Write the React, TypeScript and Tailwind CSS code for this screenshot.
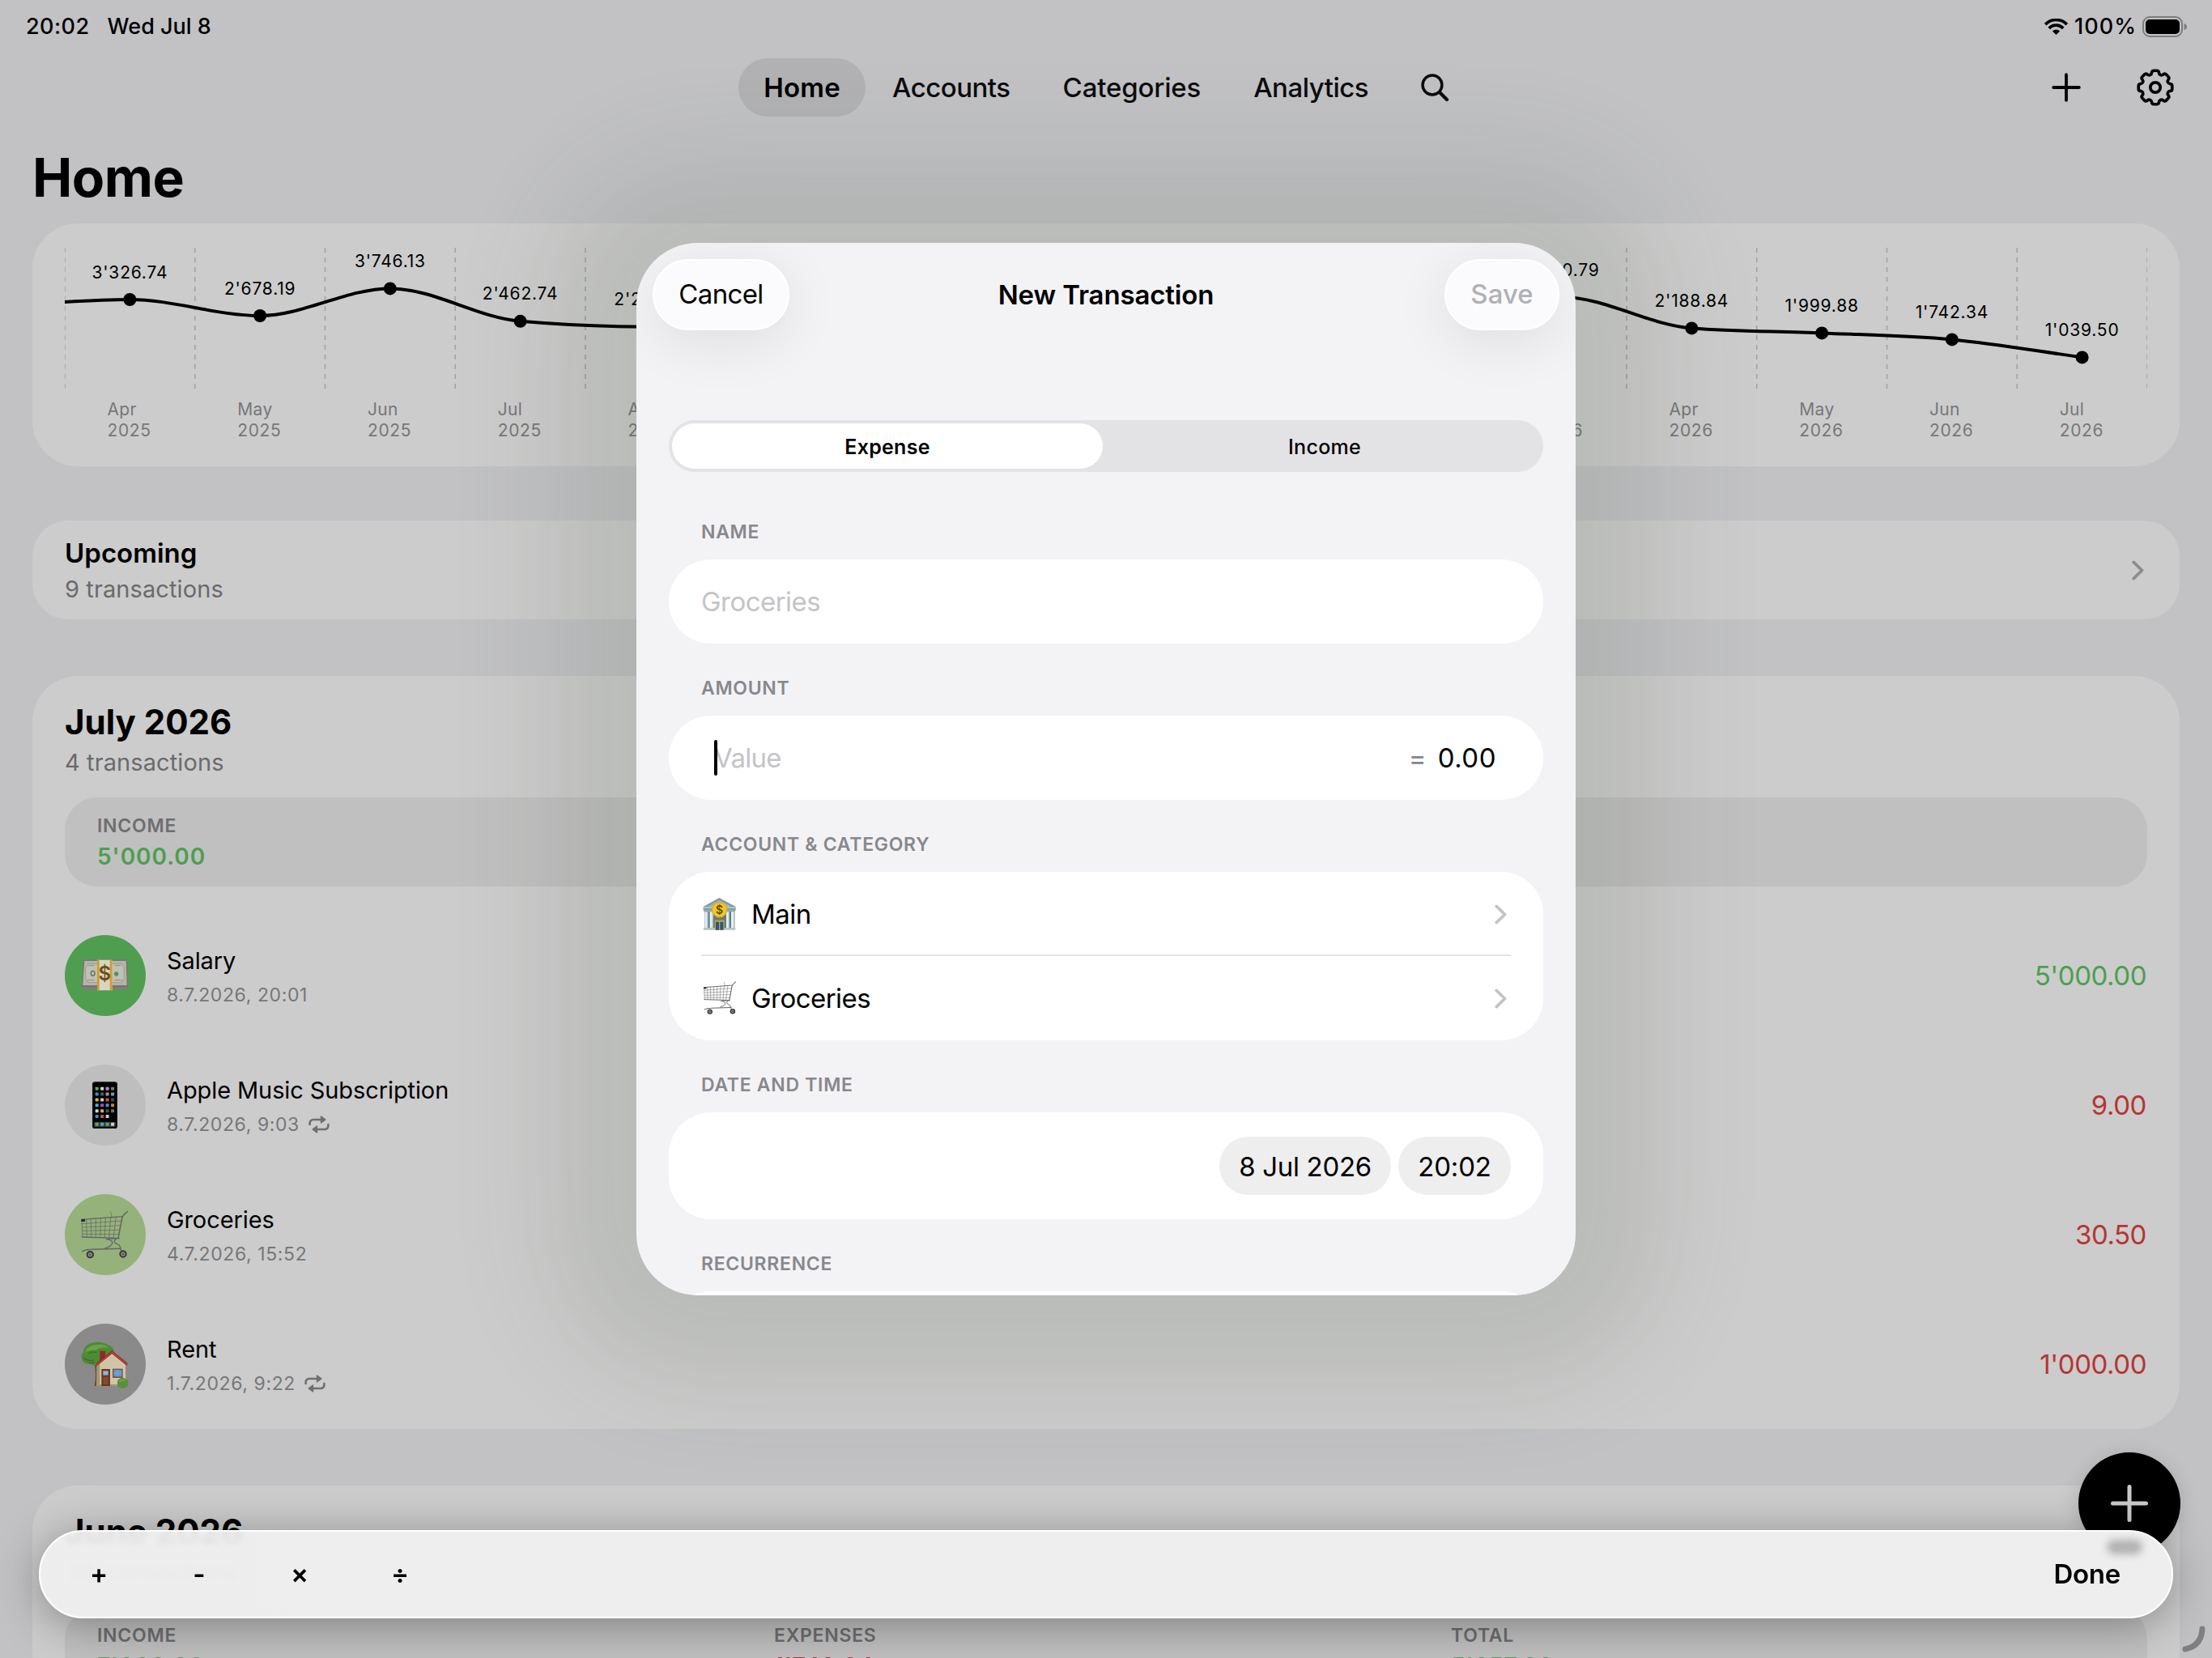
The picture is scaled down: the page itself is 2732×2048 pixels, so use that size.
import type { ReactNode } from "react";
import clsx from "clsx";

interface Transaction {
    name: string;
    date: string;
    amount: string;
    income?: boolean;
    recurring?: boolean;
    circle: string;
    icon: ReactNode;
}

const MONTH_WIDTH = 160.75;

const balances = [
    { month: "Apr", year: "2025", label: "3'326.74", y: 94 },
    { month: "May", year: "2025", label: "2'678.19", y: 114 },
    { month: "Jun", year: "2025", label: "3'746.13", y: 80.4 },
    { month: "Jul", year: "2025", label: "2'462.74", y: 120.8 },
    { month: "Aug", year: "2025", label: "2'249.10", y: 127.6 },
    { month: "Sep", year: "2025", label: "2'310.55", y: 125.6 },
    { month: "Oct", year: "2025", label: "2'604.20", y: 116.4 },
    { month: "Nov", year: "2025", label: "2'480.00", y: 120.2 },
    { month: "Dec", year: "2025", label: "2'905.35", y: 107 },
    { month: "Jan", year: "2026", label: "3'104.90", y: 100.8 },
    { month: "Feb", year: "2026", label: "3'288.45", y: 95 },
    { month: "Mar", year: "2026", label: "3'420.79", y: 91 },
    { month: "Apr", year: "2026", label: "2'188.84", y: 129.4 },
    { month: "May", year: "2026", label: "1'999.88", y: 135.4 },
    { month: "Jun", year: "2026", label: "1'742.34", y: 143.4 },
    { month: "Jul", year: "2026", label: "1'039.50", y: 165.4 },
];

const monthX = (i: number) => (i + 0.5) * MONTH_WIDTH;

// Monotone cubic interpolation through the points
const curve = (pts: [number, number][]) => {
    const slopes = pts.slice(1).map((p, i) => (p[1] - pts[i][1]) / (p[0] - pts[i][0]));
    const tangent = (i: number) => {
        if (i === 0) return slopes[0];
        if (i === pts.length - 1) return slopes[slopes.length - 1];
        const a = slopes[i - 1];
        const b = slopes[i];
        if (a * b <= 0) return 0;
        return Math.sign(a) * 2 * Math.min(Math.abs(a), Math.abs(b), Math.abs(a + b) / 4);
    };
    return pts.slice(1).reduce((d, p, i) => {
        const q = pts[i];
        const h = (p[0] - q[0]) / 3;
        return `${d}C${q[0] + h} ${q[1] + h * tangent(i)} ${p[0] - h} ${p[1] - h * tangent(i + 1)} ${p[0]} ${p[1]}`;
    }, `M${pts[0][0]} ${pts[0][1]}`);
};

const BalanceChart = () => (
    <svg className="block h-[300px] w-[2572px]" viewBox="0 0 2572 300">
        {Array.from({ length: 17 }, (_, i) => (
            <line
                key={i}
                x1={i * MONTH_WIDTH}
                x2={i * MONTH_WIDTH}
                y1="30"
                y2="204"
                stroke="#a2a2a2"
                strokeWidth="1.6"
                strokeDasharray="6 6"
            />
        ))}
        <path
            d={curve([[-MONTH_WIDTH / 2, 102], ...balances.map((b, i): [number, number] => [monthX(i), b.y])])}
            fill="none"
            stroke="#000"
            strokeWidth="4"
        />
        {balances.map((b, i) => (
            <g key={i}>
                <circle cx={monthX(i)} cy={b.y} r="8" />
                <text x={monthX(i)} y={b.y - 26.5} textAnchor="middle" className="text-[21px] tracking-[0.8px]">
                    {b.label}
                </text>
                <text x={monthX(i) - 28} y="237" className="fill-[#777779] text-[21px] tracking-[0.4px]">
                    {b.month}
                </text>
                <text x={monthX(i) - 28} y="263" className="fill-[#777779] text-[21px] tracking-[0.7px]">
                    {b.year}
                </text>
            </g>
        ))}
    </svg>
);

const MoneyEmoji = () => (
    <svg className="size-full" viewBox="30 15 300 300">
        <path d="M93 203h172l-1 14H98z" fill="#6d6d69" />
        <path d="M94 210h170M95 215h168" stroke="#a3a39d" strokeWidth="1.5" />
        <path d="M98 106h164l3 100H92z" fill="#77776f" />
        <path d="M103 111h154l3 90H97z" fill="#b4b5a8" />
        <path d="M116 122h125q2 10 9 12v44q-8 2-9 13H116q-2-11-9-13v-44q8-2 9-12z" fill="#bfc1b2" stroke="#8f9188" strokeWidth="2" />
        <path d="M118 128h22M216 128h20M114 182h26M214 182h26" stroke="#8f9188" strokeWidth="3" />
        <ellipse cx="134" cy="157" rx="7" ry="9" fill="none" stroke="#66675f" strokeWidth="4" />
        <circle cx="221" cy="159" r="8" fill="#4f8f6c" />
        <path d="M150 107h55l1 113h-56z" fill="#d9d5c5" />
        <path d="M150 107h8v113h-8zM197 107h8l1 113h-9z" fill="#d19e27" />
        <text x="178" y="184" textAnchor="middle" className="fill-[#6b4f17] text-[72px] font-semibold">$</text>
    </svg>
);

const apps = [
    ["#44b84e", "#d2d2d2", "#b885cc", "#77777b"],
    ["#3c8fce", "#56565a", "#a99588", "#57aebf"],
    ["#cdb94c", "#d0d0d0", "#c8504a", "#48484c"],
    ["#4bb0c9", "#bd42c6", "#3c92d8", "#d2821f"],
    ["#d2d2d2", "#c5bc47", "#515155", "#717175"],
    ["#3f8fd6", "#c8544c", "#cccccc"],
];

const PhoneEmoji = () => (
    <svg className="size-full" viewBox="30 495 300 300">
        <rect x="132" y="559" width="93" height="173" rx="10" fill="#000" />
        <rect x="134" y="561" width="89" height="169" rx="9" fill="none" stroke="#2c2c2e" strokeWidth="2" />
        {apps.map((row, r) =>
            row.map((color, c) => (
                <rect key={`${r}-${c}`} x={143 + c * 19.4} y={578 + r * 20.6} width="12" height="12" rx="2" fill={color} />
            ))
        )}
        <rect x="138" y="707" width="81" height="19" rx="5" fill="#3b3b3e" />
        {["#44b84e", "#49a9cf", "#4bb654", "#cfcfcf"].map((color, c) => (
            <rect key={c} x={143 + c * 19.4} y="710" width="12" height="12" rx="2" fill={color} />
        ))}
    </svg>
);

const CartEmoji = ({ viewBox, className }: { viewBox: string; className: string }) => (
    <svg className={className} viewBox={viewBox} fill="none" stroke="#65656a" strokeLinecap="round">
        <path d="M92 121 243 110M94 186 228 190" strokeWidth="4" />
        <path d="M93 121 96 186M110 120l2 66M127 119l1 68M145 118v69M163 116l-1 72M181 115l-3 73M200 113l-6 76M220 112l-10 77" strokeWidth="2.2" />
        <path d="M93 137 240 126M94 150 237 143M95 163 234 160M96 175 231 176" strokeWidth="2.2" />
        <path d="M228 190 243 112Q248 103 262 92" strokeWidth="4.5" />
        <path d="M200 92l4 22" strokeWidth="2" />
        <path d="M184 194Q212 198 205 212 196 224 180 227M222 192Q206 203 222 211 238 216 238 236" strokeWidth="4" />
        <path d="M95 239Q110 232 130 232L238 229" strokeWidth="4.5" />
        <path d="M232 191 190 193" strokeWidth="4" />
        <rect x="91" y="120" width="14" height="9" fill="#1f2f45" stroke="none" />
        <circle cx="124" cy="251" r="11" fill="#8c8c8c" stroke="#38363a" strokeWidth="6" />
        <circle cx="246" cy="249" r="11" fill="#8c8c8c" stroke="#38363a" strokeWidth="6" />
        <circle cx="124" cy="251" r="3" fill="#38363a" stroke="none" />
        <circle cx="246" cy="249" r="3" fill="#38363a" stroke="none" />
    </svg>
);

const HouseEmoji = () => (
    <svg className="size-full" viewBox="30 507 300 300">
        <path d="M140 655h20v83h-20q8-38 0-83z" fill="#6e4a26" />
        <g fill="#4f8a35">
            <ellipse cx="152" cy="611" rx="53" ry="36" />
            <circle cx="118" cy="630" r="26" />
            <circle cx="140" cy="642" r="20" />
            <circle cx="186" cy="612" r="26" />
        </g>
        <path d="M104 612q14-24 40-26 30-6 48 10-30-4-44 8-24 0-44 8z" fill="#6aa448" />
        <path d="M100 634q14 14 36 8M118 652q14 4 24-4M118 618q14-10 30-4" stroke="#3a6d27" strokeWidth="4" fill="none" />
        <path d="M160 608h20v32l-20 16z" fill="#8d2d27" />
        <path d="M150 660 205 614l50 46v78H148z" fill="#cfc5a6" />
        <path d="M148 738V664l12-10v84zM148 732h107v6H148z" fill="#a3977a" />
        <path d="M147 661 205 614l57 46" fill="none" stroke="#b93a35" strokeWidth="8" strokeLinejoin="round" />
        <path d="M147 655 205 608l57 46" fill="none" stroke="#6c2320" strokeWidth="2.5" />
        <path d="M166 675h32v63h-32z" fill="#6a3620" />
        <path d="M172 682h19v16h-19z" fill="#8fb4d4" />
        <path d="M172 704h19v28h-19z" fill="#824a2e" />
        <path d="M207 674h38v34h-38z" fill="#7a5234" />
        <path d="M211 678h30v25h-30z" fill="#5f97d2" />
        <path d="M226 678v25M211 690h30" stroke="#8bb6e2" strokeWidth="2" />
        <path d="M225 728q-2-14 10-18 10-6 20 2 12 4 10 16 2 12-10 16-12 6-22 0-10-4-8-16z" fill="#5b8f3c" />
        <path d="M232 722q8-8 20-4" stroke="#7cb058" strokeWidth="4" fill="none" />
    </svg>
);

const BankEmoji = () => (
    <svg className="size-[42px]" viewBox="24 26 126 126">
        <path d="M26 62 85 29l61 33v14H26z" fill="#7f9aa3" />
        <path d="M40 62 85 37l46 25z" fill="#9db5bc" />
        <path d="M30 76h112v64H30z" fill="#5f7d88" />
        <path d="M26 63h120v5H26z" fill="#b7c9ce" />
        <path d="M28 72h116v9H28z" fill="#8fa9b1" />
        <path d="M31 81h12v60H31zM50 81h12v60H50zM111 81h11v60h-11zM129 81h12v60h-12z" fill="#e9f0f1" />
        <path d="M40 81h3v60h-3zM59 81h3v60h-3zM119 81h3v60h-3zM138 81h3v60h-3z" fill="#a9bcc2" />
        <path d="M27 140h118v8H27z" fill="#b3c3c6" />
        <path d="M68 112h36v36H68z" fill="#c8a52b" />
        <path d="M72 118h12v30H72zM88 118h12v30H88z" fill="#27558c" />
        <circle cx="86" cy="73" r="29" fill="#f4c81e" />
        <circle cx="86" cy="73" r="27" fill="none" stroke="#dba90f" strokeWidth="3" />
        <text x="86" y="88" textAnchor="middle" className="fill-[#5d4a12] text-[42px] font-semibold">$</text>
    </svg>
);

const transactions: Transaction[] = [
    { name: "Salary", date: "8.7.2026, 20:01", amount: "5'000.00", income: true, circle: "bg-[#4f9e50]", icon: <MoneyEmoji /> },
    { name: "Apple Music Subscription", date: "8.7.2026, 9:03", amount: "9.00", recurring: true, circle: "bg-[#bebebe]", icon: <PhoneEmoji /> },
    {
        name: "Groceries",
        date: "4.7.2026, 15:52",
        amount: "30.50",
        circle: "bg-[#94b279]",
        icon: <CartEmoji className="size-full" viewBox="30 27 300 300" />,
    },
    { name: "Rent", date: "1.7.2026, 9:22", amount: "1'000.00", recurring: true, circle: "bg-[#8a8a8a]", icon: <HouseEmoji /> },
];

// Eight-toothed outline with softened corners
const gearPath = (() => {
    const points: [number, number][] = [];
    for (let i = 0; i < 8; i++) {
        for (const [r, offset] of [[16.8, -16], [21.2, -11.5], [21.2, 11.5], [16.8, 16]]) {
            const a = ((i * 45 + offset - 90) * Math.PI) / 180;
            points.push([24 + r * Math.cos(a), 24 + r * Math.sin(a)]);
        }
    }
    const toward = (p: [number, number], q: [number, number]) => {
        const d = Math.hypot(q[0] - p[0], q[1] - p[1]);
        const k = Math.min(0.5, 2.6 / d);
        return `${(p[0] + (q[0] - p[0]) * k).toFixed(2)} ${(p[1] + (q[1] - p[1]) * k).toFixed(2)}`;
    };
    return points
        .map((p, i) => {
            const prev = points[(i + points.length - 1) % points.length];
            const next = points[(i + 1) % points.length];
            return `${i ? "L" : "M"}${toward(p, prev)}Q${p[0].toFixed(2)} ${p[1].toFixed(2)} ${toward(p, next)}`;
        })
        .join("") + "Z";
})();

const Gear = () => (
    <svg className="size-12" viewBox="0 0 48 48" fill="none" stroke="#000" strokeWidth="3.7" strokeLinejoin="round">
        <path d={gearPath} />
        <circle cx="24" cy="24" r="6.2" />
    </svg>
);

const Repeat = () => (
    <svg className="ml-[11px] h-[22px] w-[26px]" viewBox="0 0 26 22" fill="none" stroke="#6f6f71" strokeWidth="2.6" strokeLinecap="round">
        <path d="M1.6 11V9.3A4.3 4.3 0 0 1 5.9 5H16M24.4 11v1.7a4.3 4.3 0 0 1-4.3 4.3H10" />
        <path d="M15.5 1v8L21 5zM10.5 13v8L5 17z" fill="#6f6f71" strokeWidth="1.4" strokeLinejoin="round" />
    </svg>
);

const Chevron = ({ className }: { className: string }) => (
    <svg className={clsx("h-[25px] w-[15px]", className)} viewBox="0 0 15 25" fill="none" stroke="currentColor" strokeWidth="3.6" strokeLinecap="round" strokeLinejoin="round">
        <path d="M2.2 2.4 12.6 12.5 2.2 22.6" />
    </svg>
);

const StatusBar = () => (
    <div className="flex h-16 shrink-0 items-center pt-px pr-[30px] pl-8 text-[27px] leading-[36px] font-medium">
        <span className="tracking-[0.45px]">20:02</span>
        <span className="ml-[22px]">Wed Jul 8</span>
        <svg className="ml-auto h-5 w-[29px]" viewBox="0 0 29 20" fill="none" stroke="#000" strokeWidth="3.7">
            <path d="M1.2 7.2A18.3 18.3 0 0 1 27.8 7.2" />
            <path d="M5.8 11.9a11.8 11.8 0 0 1 17.4 0" />
            <path d="M14.5 20 9.9 15.4a6.6 6.6 0 0 1 9.2 0z" fill="#000" stroke="none" />
        </svg>
        <span className="ml-2 tracking-[1px]">100%</span>
        <svg className="ml-[7px] h-[26px] w-[56px]" viewBox="0 0 56 26">
            <rect x="1" y="1" width="48" height="24" rx="8" fill="none" stroke="#7d7d80" strokeWidth="2" />
            <rect x="4" y="4" width="42" height="18" rx="5" />
            <path d="M51.5 9q3.5 1 3.5 4t-3.5 4z" fill="#7d7d80" />
        </svg>
    </div>
);

const NavBar = () => (
    <nav className="mt-2 flex h-[72px] shrink-0 items-center pr-[46px] pl-[912px] text-[33px] leading-none font-medium text-[#0c0c0d]">
        <span className="flex h-full w-[157px] items-center justify-center rounded-full bg-[#b2b2b4] font-semibold tracking-[0.2px] text-black">
            Home
        </span>
        <div className="ml-[33px] flex items-center gap-[65px]">
            <span className="tracking-[-0.5px]">Accounts</span>
            <span className="tracking-[-0.17px]">Categories</span>
            <span className="tracking-[-0.5px]">Analytics</span>
            <svg className="size-[35px]" viewBox="0 0 35 35" fill="none" stroke="#0c0c0d" strokeLinecap="round">
                <circle cx="14" cy="14" r="11.9" strokeWidth="3.5" />
                <path d="m23 23 9 9" strokeWidth="4.2" />
            </svg>
        </div>
        <svg className="ml-auto size-9" viewBox="0 0 36 36" stroke="#000" strokeWidth="3.8" strokeLinecap="round">
            <path d="M18 2.2v31.6M2.2 18h31.6" />
        </svg>
        <div className="ml-[68px]">
            <Gear />
        </div>
    </nav>
);

const Stat = ({ label, value, negative }: { label: string; value: string; negative?: boolean }) => (
    <div>
        <p className="h-[30px] text-[23px] leading-[30px] font-semibold tracking-[0.75px] text-[#6e6e70]">{label}</p>
        <p
            className={clsx(
                "mt-[4.5px] h-9 text-[28px] leading-9 font-semibold tracking-[0.96px]",
                negative ? "text-[#bb3533]" : "text-[#4c9f4e]"
            )}
        >
            {value}
        </p>
    </div>
);

const MonthHeader = ({ title, count, children }: { title: string; count: string; children: ReactNode }) => (
    <>
        <h2 className="h-[50px] text-[42px] leading-[50px] font-bold">{title}</h2>
        <p className="mt-[6.5px] h-9 text-[29px] leading-9 tracking-[0.1px] text-[#6a6a6d]">{count}</p>
        <div className="mt-[25.5px] grid h-[110px] grid-cols-3 gap-4 rounded-[40px] bg-[#c0c0c0] px-10 pt-5">{children}</div>
    </>
);

const TransactionRow = ({ item }: { item: Transaction }) => (
    <div className="mt-[60px] flex h-[100px]">
        <div className={clsx("size-[100px] rounded-full", item.circle)}>{item.icon}</div>
        <div className="ml-[26px] pt-[13.5px]">
            <p className="h-9 text-[29px] leading-9 tracking-[-0.1px]">{item.name}</p>
            <p className="mt-[9px] flex h-[30px] items-center text-[23px] leading-[30px] tracking-[0.6px] text-[#777779]">
                {item.date}
                {item.recurring && <Repeat />}
            </p>
        </div>
        <span
            className={clsx(
                "mr-px ml-auto self-center text-[33px] leading-[40px] tracking-[-0.45px]",
                item.income ? "text-[#4c9f4e]" : "text-[#b53534]"
            )}
        >
            {item.amount}
        </span>
    </div>
);

const HomePage = () => (
    <div className="flex h-full flex-col">
        <StatusBar />
        <NavBar />
        <h1 className="mt-[33px] ml-10 h-[84px] shrink-0 text-[66px] leading-[84px] font-bold tracking-[-0.5px]">Home</h1>
        <div className="mx-10 mt-[15px] h-[300px] shrink-0 rounded-[56px] bg-[#cccccc] px-10">
            <BalanceChart />
        </div>
        <div className="mx-10 mt-[67px] flex h-[122px] shrink-0 items-start rounded-[44px] bg-[#cccccc] pt-5 pr-[44px] pl-10">
            <div>
                <p className="h-10 text-[33px] leading-10 font-semibold">Upcoming</p>
                <p className="mt-[7px] h-9 text-[29px] leading-9 tracking-[0.1px] text-[#6a6a6d]">9 transactions</p>
            </div>
            <Chevron className="mt-[29px] ml-auto text-[#8c8c8e]" />
        </div>
        <div className="mx-10 mt-[70px] h-[930px] shrink-0 rounded-[56px] bg-[#cccccc] px-10 pt-8">
            <MonthHeader title="July 2026" count="4 transactions">
                <Stat label="INCOME" value="5'000.00" />
            </MonthHeader>
            {transactions.map((item) => (
                <TransactionRow key={item.name} item={item} />
            ))}
        </div>
        <div className="mx-10 mt-[70px] h-[400px] shrink-0 rounded-t-[56px] bg-[#cccccc] px-10 pt-8">
            <MonthHeader title="June 2026" count="39 transactions">
                <Stat label="INCOME" value="7'000.00" />
                <Stat label="EXPENSES" value="1'742.34" negative />
                <Stat label="TOTAL" value="5'257.66" />
            </MonthHeader>
        </div>
    </div>
);

const FormSection = ({ title, children }: { title: string; children?: ReactNode }) => (
    <section>
        <h3 className="h-[89px] pt-[39.5px] pl-10 text-[23px] leading-[30px] font-semibold tracking-[0.7px] text-[#88888c]">
            {title}
        </h3>
        <div className="rounded-[52px] bg-white">{children}</div>
    </section>
);

const PickerRow = ({ icon, label }: { icon: ReactNode; label: string }) => (
    <div className="flex h-[104px] items-center pr-[45px] pl-[42px]">
        {icon}
        <span className="ml-[18px] text-[33px] leading-[40px] tracking-[-0.55px]">{label}</span>
        <Chevron className="ml-auto text-[#c3c3c6]" />
    </div>
);

const NewTransactionModal = () => (
    <div className="absolute top-[300px] left-[786px] h-[1300px] w-[1160px] rounded-[76px] shadow-[0_0_130px_105px_rgba(60,72,48,0.12)]">
        <div className="h-full overflow-hidden rounded-[76px] bg-[#f3f3f6]">
            <header className="grid h-[108px] grid-cols-[1fr_auto_1fr] items-end px-5 text-[33px]">
                <button className="flex h-[88px] w-[169px] items-center justify-center rounded-full border-2 border-white bg-[#fbfbfd] tracking-[-0.66px] shadow-[0_14px_70px_rgba(0,0,0,0.09)]">
                    Cancel
                </button>
                <span className="self-end text-[33px] leading-[88px] font-semibold tracking-[-0.15px]">New Transaction</span>
                <button className="flex h-[88px] w-[142px] items-center justify-center justify-self-end rounded-full border-2 border-white bg-[#fbfbfd] font-medium text-[#b1b1b3] shadow-[0_14px_70px_rgba(0,0,0,0.09)]">
                    Save
                </button>
            </header>
            <div className="px-10 pt-[111px]">
                <div className="mb-[19px] grid h-16 grid-cols-2 gap-2 rounded-full bg-[#e3e3e6] p-1 text-[25px] leading-[30px] tracking-[0.28px]">
                    <span className="flex items-center justify-center rounded-full bg-white pt-px font-semibold">Expense</span>
                    <span className="flex items-center justify-center pt-px font-medium">Income</span>
                </div>
                <FormSection title="NAME">
                    <p className="pl-10 text-[33px] leading-[104px] tracking-[-0.55px] text-[#c4c4c7]">Groceries</p>
                </FormSection>
                <FormSection title="AMOUNT">
                    <div className="flex h-[104px] items-center pr-[58px] pl-14 text-[33px] leading-10">
                        <div className="relative">
                            <span className="tracking-[-0.7px] text-[#c4c4c7]">Value</span>
                            <span className="absolute -top-0.5 left-0 h-11 w-1 rounded-full bg-black" />
                        </div>
                        <span className="ml-auto text-[#85858a]">=</span>
                        <span className="ml-[14px] tracking-[0.5px]">0.00</span>
                    </div>
                </FormSection>
                <FormSection title="ACCOUNT & CATEGORY">
                    <div className="relative">
                        <PickerRow icon={<BankEmoji />} label="Main" />
                        <PickerRow icon={<CartEmoji className="size-[42px]" viewBox="86 88 182 182" />} label="Groceries" />
                        <div className="absolute inset-x-10 top-[102px] h-[2px] bg-[#e4e4e6]" />
                    </div>
                </FormSection>
                <FormSection title="DATE AND TIME">
                    <div className="flex h-[132px] items-center justify-end gap-[9px] pr-10 text-[33px] leading-10">
                        <span className="flex h-[72px] w-[212px] items-center justify-center rounded-full bg-[#eeeeef] pt-px tracking-[-0.32px]">
                            8 Jul 2026
                        </span>
                        <span className="flex h-[72px] w-[139px] items-center justify-center rounded-full bg-[#eeeeef] pt-px tracking-[-0.2px]">
                            20:02
                        </span>
                    </div>
                </FormSection>
                <FormSection title="RECURRENCE">
                    <div className="h-[104px]" />
                </FormSection>
            </div>
        </div>
    </div>
);

const KeyboardToolbar = () => (
    <div className="absolute top-[1890px] left-12 flex h-[109px] w-[2636px] items-center rounded-full border-2 border-white bg-linear-to-r from-[#f0f0f0]/94 from-[260px] to-[#eeeeee] to-[320px] pr-[63px] pb-px pl-[10px] text-[33px] leading-10 font-semibold shadow-[0_8px_56px_rgba(0,0,0,0.34)] backdrop-blur-[4px]">
        <span className="absolute top-[10px] right-[36px] h-[18px] w-[44px] rounded-full bg-black/25 blur-[5px]" />
        {["+", "-", "×", "÷"].map((op) => (
            <span key={op} className="w-[124px] text-center">
                {op}
            </span>
        ))}
        <span className="ml-auto tracking-[-0.27px]">Done</span>
    </div>
);

const App = () => (
    <div className="relative h-[2048px] w-[2732px] overflow-hidden bg-[#c2c2c5] font-[Inter,sans-serif] text-black">
        <HomePage />
        <button className="absolute top-[1794px] left-[2567px] flex size-[126px] items-center justify-center rounded-full bg-black shadow-[0_4px_24px_rgba(0,0,0,0.15)]">
            <svg className="size-12" viewBox="0 0 48 48" stroke="#cbcbcb" strokeWidth="5" strokeLinecap="round">
                <path d="M24 3.5v41M3.5 24h41" />
            </svg>
        </button>
        <svg className="absolute right-0 bottom-0 h-12 w-12" viewBox="0 0 48 48" fill="none" stroke="#808082" strokeWidth="7" strokeLinecap="round">
            <path d="M36 12q-1 21-21 25" />
        </svg>
        <NewTransactionModal />
        <KeyboardToolbar />
    </div>
);

export default App;
